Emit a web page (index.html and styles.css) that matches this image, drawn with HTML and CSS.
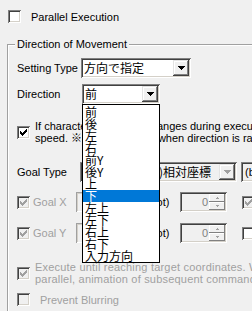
FILE: index.html
```html
<!DOCTYPE html>
<html lang="ja">
<head>
    <meta charset="UTF-8">
    <title>Direction of Movement</title>
    <link rel="stylesheet" href="styles.css">
</head>
<body>
    <div class="top-row">
        <span class="check"></span>
        <span>Parallel Execution</span>
    </div>

    <div class="group">
        <div class="group-inner">
            <div class="legend">Direction of Movement</div>

            <div class="row row-setting">
                <span class="field-label">Setting Type</span>
                <div class="combo combo-setting">
                    <span class="combo-text">方向で指定</span>
                    <span class="combo-btn"><svg width="7" height="4" viewBox="0 0 7 4"><path d="M0 0h7v1H0zM1 1h5v1H1zM2 2h3v1H2zM3 3h1v1H3z"/></svg></span>
                </div>
            </div>

            <div class="row row-direction">
                <span class="field-label">Direction</span>
                <div class="combo combo-direction">
                    <span class="combo-text">前</span>
                    <span class="combo-btn"><svg width="7" height="4" viewBox="0 0 7 4"><path d="M0 0h7v1H0zM1 1h5v1H1zM2 2h3v1H2zM3 3h1v1H3z"/></svg></span>
                    <ul class="dropdown">
                        <li>前</li>
                        <li>後</li>
                        <li>左</li>
                        <li>右</li>
                        <li>前Y</li>
                        <li>後Y</li>
                        <li>上</li>
                        <li class="selected">下</li>
                        <li>左上</li>
                        <li>左下</li>
                        <li>右上</li>
                        <li>右下</li>
                        <li>入力方向</li>
                    </ul>
                </div>
            </div>

            <div class="row row-check row-keep">
                <span class="check"><svg viewBox="0 0 7 7"><path d="M6 0h1v1h-1zM5 1h2v1h-2zM0 2h1v1H0zM4 2h3v1H4zM0 3h2v1H0zM3 3h3v1H3zM0 4h5v1H0zM1 5h3v1H1zM2 6h1v1H2z"/></svg></span>
                <span class="multi">If character's direction changes during execution, moves at current<br>speed. ※ Not applicable when direction is random</span>
            </div>

            <div class="row row-goal-type">
                <span class="field-label">Goal Type</span>
                <div class="combo combo-goal combo-off">
                    <span class="combo-text">イベント(自分)相対座標</span>
                    <span class="combo-btn"><svg width="7" height="4" viewBox="0 0 7 4"><path d="M0 0h7v1H0zM1 1h5v1H1zM2 2h3v1H2zM3 3h1v1H3z"/></svg></span>
                </div>
                <div class="combo combo-unit combo-off">
                    <span class="combo-text">(by dot)</span>
                </div>
            </div>

            <div class="row row-goal row-goal-x">
                <span class="check disabled"><svg viewBox="0 0 7 7"><path d="M6 0h1v1h-1zM5 1h2v1h-2zM0 2h1v1H0zM4 2h3v1H4zM0 3h2v1H0zM3 3h3v1H3zM0 4h5v1H0zM1 5h3v1H1zM2 6h1v1H2z"/></svg></span>
                <span class="goal-label off">Goal X</span>
                <span class="goal-field"></span>
                <span class="unit">(Dot)</span>
                <div class="spin">
                    <span class="spin-val">0</span>
                    <span class="spin-btns">
                        <span class="spin-btn"><svg width="3" height="2" viewBox="0 0 3 2"><path d="M1 0h1v1H1zM0 1h3v1H0z"/></svg></span>
                        <span class="spin-btn"><svg width="3" height="2" viewBox="0 0 3 2"><path d="M0 0h3v1H0zM1 1h1v1H1z"/></svg></span>
                    </span>
                </div>
                <span class="check disabled"><svg viewBox="0 0 7 7"><path d="M6 0h1v1h-1zM5 1h2v1h-2zM0 2h1v1H0zM4 2h3v1H4zM0 3h2v1H0zM3 3h3v1H3zM0 4h5v1H0zM1 5h3v1H1zM2 6h1v1H2z"/></svg></span>
            </div>

            <div class="row row-goal row-goal-y">
                <span class="check disabled"><svg viewBox="0 0 7 7"><path d="M6 0h1v1h-1zM5 1h2v1h-2zM0 2h1v1H0zM4 2h3v1H4zM0 3h2v1H0zM3 3h3v1H3zM0 4h5v1H0zM1 5h3v1H1zM2 6h1v1H2z"/></svg></span>
                <span class="goal-label off">Goal Y</span>
                <span class="goal-field"></span>
                <span class="unit">(Dot)</span>
                <div class="spin">
                    <span class="spin-val">0</span>
                    <span class="spin-btns">
                        <span class="spin-btn"><svg width="3" height="2" viewBox="0 0 3 2"><path d="M1 0h1v1H1zM0 1h3v1H0z"/></svg></span>
                        <span class="spin-btn"><svg width="3" height="2" viewBox="0 0 3 2"><path d="M0 0h3v1H0zM1 1h1v1H1z"/></svg></span>
                    </span>
                </div>
                <span class="check"></span>
            </div>

            <div class="row row-check row-execute">
                <span class="check disabled"><svg viewBox="0 0 7 7"><path d="M6 0h1v1h-1zM5 1h2v1h-2zM0 2h1v1H0zM4 2h3v1H4zM0 3h2v1H0zM3 3h3v1H3zM0 4h5v1H0zM1 5h3v1H1zM2 6h1v1H2z"/></svg></span>
                <span class="multi off wide">Execute until reaching target coordinates. When executed in<br>parallel, animation of subsequent commands is not waited for</span>
            </div>

            <div class="row row-check row-blur">
                <span class="check disabled"></span>
                <span class="off blur-label">Prevent Blurring</span>
            </div>
        </div>
    </div>
</body>
</html>
```

FILE: styles.css
```css
* {
    box-sizing: border-box;
}
html, body {
    margin: 0;
    padding: 0;
}
body {
    width: 252px;
    height: 311px;
    overflow: hidden;
    background: #f0f0f0;
    font-family: "Liberation Sans", "Noto Sans CJK JP", sans-serif;
    font-size: 11px;
    color: #000;
}
.off {
    color: #a0a0a0;
}

/* checkbox */
.check {
    flex: none;
    width: 13px;
    height: 13px;
    display: flex;
    align-items: center;
    justify-content: center;
    background: #fff;
    box-shadow: inset 1px 1px #808080, inset -1px -1px #fff, inset 2px 2px #404040, inset -2px -2px #d4d0c8;
}
.check svg {
    width: 7px;
    height: 7px;
    display: block;
    fill: #000;
    shape-rendering: crispEdges;
}
.check.disabled {
    background: #f0f0f0;
}
.check.disabled svg {
    fill: #a0a0a0;
}

.top-row {
    display: flex;
    align-items: center;
    gap: 10px;
    height: 13px;
    margin: 10px 0 0 8px;
}

/* group box */
.group {
    margin: 21px 0 0 7px;
    border-top: 1px solid #a0a0a0;
    border-left: 1px solid #a0a0a0;
}
.group-inner {
    border-top: 1px solid #fff;
    border-left: 1px solid #fff;
    padding-left: 8px;
    height: 270px;
}
.legend {
    display: table;
    margin: -8px 0 0 -2px;
    padding: 0 2px;
    height: 13px;
    line-height: 13px;
    background: #f0f0f0;
}

.row {
    display: flex;
    align-items: center;
}
.field-label {
    flex: none;
    width: 64px;
    white-space: nowrap;
}
.row-setting {
    margin-top: 7px;
    height: 20px;
}
.row-direction {
    margin-top: 6px;
    height: 20px;
}
.row-keep {
    margin-top: 16px;
    height: 24px;
}
.row-goal-type {
    margin-top: 18px;
    height: 20px;
}
.row-goal-x {
    margin-top: 10px;
    height: 20px;
}
.row-goal-y {
    margin-top: 11px;
    height: 20px;
}
.row-execute {
    margin-top: 18px;
    height: 24px;
}
.row-blur {
    margin-top: 8px;
    height: 13px;
}
.row-check {
    gap: 5px;
}
.multi {
    white-space: nowrap;
    line-height: 12px;
}
.multi.wide {
    letter-spacing: 0.2px;
}
.blur-label {
    margin-left: 5px;
}

/* combo box */
.combo {
    position: relative;
    flex: none;
    height: 20px;
    display: flex;
    align-items: center;
    padding: 2px;
    background: #fff;
    box-shadow: inset 1px 1px #808080, inset -1px -1px #fff, inset 2px 2px #404040, inset -2px -2px #d4d0c8;
}
.combo-text {
    flex: 1;
    min-width: 0;
    padding-left: 1px;
    white-space: nowrap;
    overflow: hidden;
    font-family: "Noto Sans CJK JP", sans-serif;
    font-size: 12px;
    line-height: 16px;
}
.combo-btn {
    flex: none;
    width: 16px;
    height: 16px;
    display: flex;
    align-items: center;
    justify-content: center;
    background: #f0f0f0;
    box-shadow: inset -1px -1px #404040, inset 1px 1px #e3e3e3, inset -2px -2px #808080, inset 2px 2px #fff;
}
.combo-btn svg {
    display: block;
    fill: #000;
    shape-rendering: crispEdges;
}
.combo-off {
    background: #f0f0f0;
}
.combo-off .combo-btn svg {
    fill: #a0a0a0;
}
.combo-setting {
    width: 110px;
}
.combo-direction {
    width: 78px;
    margin-left: 1px;
}
.combo-goal {
    width: 157px;
    margin-left: -1px;
}
.combo-unit {
    width: 60px;
    margin-left: 4px;
}
.combo-unit .combo-text {
    font-family: "Liberation Sans", sans-serif;
    font-size: 11px;
    padding-left: 2px;
}

/* open list of the direction combo */
.dropdown {
    position: absolute;
    top: 100%;
    left: 0;
    z-index: 2;
    width: 78px;
    height: 159px;
    margin: 0;
    padding: 1px 0 0;
    list-style: none;
    overflow: hidden;
    background: #fff;
    border: 1px solid #000;
}
.dropdown li {
    height: 12px;
    line-height: 12px;
    padding-left: 2px;
    font-family: "Noto Sans CJK JP", sans-serif;
    font-size: 12px;
    white-space: nowrap;
}
.dropdown li.selected {
    background: #0078d7;
    color: #fff;
}

/* goal rows */
.goal-label {
    flex: none;
    width: 43px;
    margin-left: 3px;
    white-space: nowrap;
}
.goal-field {
    flex: none;
    width: 66px;
    height: 20px;
    box-shadow: inset 1px 1px #a0a0a0, inset -1px -1px #fff, inset 2px 2px #d4d0c8;
}
.unit {
    flex: none;
    width: 27px;
    margin-left: 3px;
    white-space: nowrap;
}
.spin {
    flex: none;
    width: 47px;
    height: 20px;
    margin: 0 15px 0 8px;
    display: flex;
    align-items: center;
    padding: 2px;
    box-shadow: inset 1px 1px #808080, inset -1px -1px #fff, inset 2px 2px #404040, inset -2px -2px #d4d0c8;
}
.spin-val {
    flex: 1;
    text-align: right;
    padding-right: 1px;
    color: #808080;
}
.spin-btns {
    flex: none;
    width: 16px;
    height: 16px;
    display: flex;
    flex-direction: column;
}
.spin-btn {
    flex: 1;
    display: flex;
    align-items: center;
    justify-content: center;
    background: #f0f0f0;
    box-shadow: inset -1px -1px #808080, inset 1px 1px #fff;
}
.spin-btn svg {
    display: block;
    fill: #a0a0a0;
    shape-rendering: crispEdges;
}
```
